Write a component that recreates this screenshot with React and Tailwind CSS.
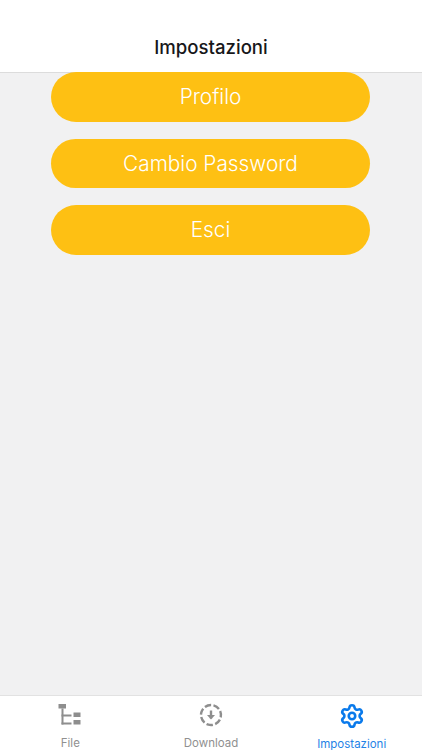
import { Settings } from "lucide-react";

const BUTTONS = ["Profilo", "Cambio Password", "Esci"];

function FileIcon() {
  return (
    <svg width="24" height="24" viewBox="0 0 24 24" fill="#8e8e8e">
      <rect x="0.5" y="1" width="7.5" height="4.5" />
      <rect x="3.5" y="5.5" width="2" height="16" />
      <rect x="3.5" y="11.5" width="10" height="2" />
      <rect x="3.5" y="19.5" width="10" height="2" />
      <rect x="15.5" y="9.5" width="7" height="4.5" />
      <rect x="15.5" y="17" width="7" height="4.5" />
    </svg>
  );
}

function DownloadIcon() {
  return (
    <svg width="24" height="24" viewBox="0 0 24 24" fill="none" stroke="#8e8e8e" strokeWidth="2.4">
      <circle cx="12" cy="12" r="10" strokeDasharray="6.5 2.4" transform="rotate(-75 12 12)" />
      <path d="M12 7.5v8" />
      <path d="M8 12h8l-4 4.5z" fill="#8e8e8e" stroke="none" />
    </svg>
  );
}

const TABS = [
  { label: "File", icon: <FileIcon /> },
  { label: "Download", icon: <DownloadIcon /> },
  { label: "Impostazioni", icon: <Settings size={26} strokeWidth={2.4} color="#0a7aeb" />, active: true },
];

export default function App() {
  return (
    <div className="flex h-[750px] w-[422px] flex-col overflow-hidden bg-[#f1f1f2] font-['Inter',sans-serif]">
      {/* Header */}
      <header className="z-10 flex h-[73px] shrink-0 items-end justify-center border-b border-[#dcdcdc] bg-white pb-[13px]">
        <h1 className="text-[18.6px] leading-6 font-medium text-[#17171a]">Impostazioni</h1>
      </header>

      {/* Buttons */}
      <main className="-mt-px flex flex-1 flex-col gap-[17px] pr-[52px] pl-[51px]">
        {BUTTONS.map((label) => (
          <button
            key={label}
            className="z-20 h-[49.5px] rounded-[25px] bg-[#fec013] text-[20.8px] font-[350] text-white"
          >
            {label}
          </button>
        ))}
      </main>

      {/* Tab bar */}
      <nav className="flex h-[55px] shrink-0 border-t border-[#e2e2e2] bg-white">
        {TABS.map(({ label, icon, active }) => (
          <div key={label} className="flex flex-1 flex-col items-center pt-[7px]">
            <div className="flex h-[25px] items-center justify-center">{icon}</div>
            <span className={`mt-[8px] text-[11.5px] leading-4 ${active ? "text-[#1f83e6]" : "text-[#909090]"}`}>
              {label}
            </span>
          </div>
        ))}
      </nav>
    </div>
  );
}
